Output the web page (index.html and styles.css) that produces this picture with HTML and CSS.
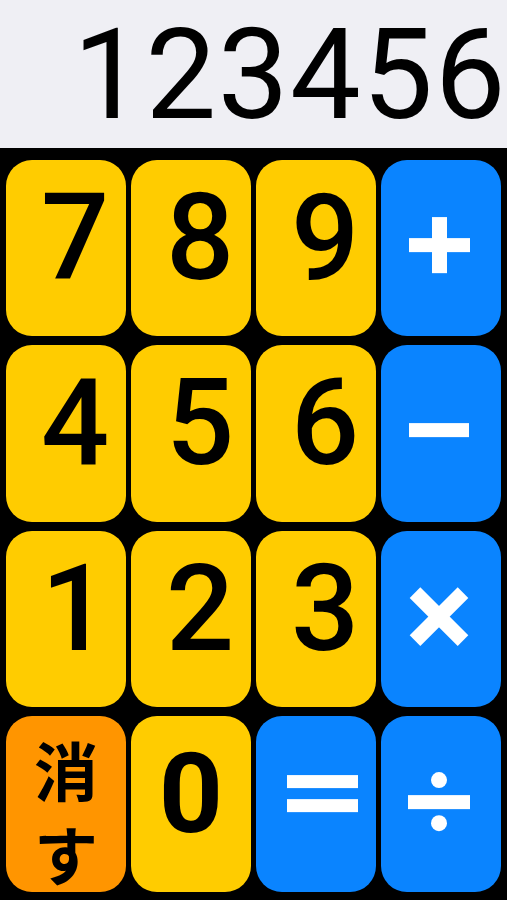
FILE: index.html
```html
<!DOCTYPE html>
<html lang="ja">
<head>
<meta charset="utf-8">
<title>Calculator</title>
<link rel="stylesheet" href="styles.css">
</head>
<body>
<div class="app">
  <div class="display">123456</div>
  <div class="keypad">
    <div class="key num">7</div>
    <div class="key num">8</div>
    <div class="key num">9</div>
    <div class="key op">
      <svg viewBox="0 0 120 176" preserveAspectRatio="none"><rect x="28" y="78" width="61" height="14" fill="#fff"/><rect x="51" y="57" width="15" height="56" fill="#fff"/></svg>
    </div>
    <div class="key num">4</div>
    <div class="key num">5</div>
    <div class="key num">6</div>
    <div class="key op">
      <svg viewBox="0 0 120 176" preserveAspectRatio="none"><rect x="28" y="78" width="60" height="14" fill="#fff"/></svg>
    </div>
    <div class="key num">1</div>
    <div class="key num">2</div>
    <div class="key num">3</div>
    <div class="key op">
      <svg viewBox="0 0 120 176" preserveAspectRatio="none"><line x1="34" y1="61.5" x2="82" y2="109.5" stroke="#fff" stroke-width="15"/><line x1="82" y1="61.5" x2="34" y2="109.5" stroke="#fff" stroke-width="15"/></svg>
    </div>
    <div class="key clear"><span class="ch">消</span><span class="ch">す</span></div>
    <div class="key num zero">0</div>
    <div class="key op">
      <svg viewBox="0 0 120 176" preserveAspectRatio="none"><rect x="31" y="59" width="71" height="13" fill="#fff"/><rect x="31" y="83" width="71" height="13" fill="#fff"/></svg>
    </div>
    <div class="key op">
      <svg viewBox="0 0 120 176" preserveAspectRatio="none"><rect x="27" y="79" width="62" height="14" fill="#fff"/><circle cx="58" cy="64" r="8" fill="#fff"/><circle cx="58" cy="107" r="8" fill="#fff"/></svg>
    </div>
  </div>
</div>
</body>
</html>
```

FILE: styles.css
```css
html, body {
  margin: 0;
  padding: 0;
  background: #000;
}

.app {
  width: 507px;
  height: 900px;
  display: flex;
  flex-direction: column;
  overflow: hidden;
}

.display {
  height: 148px;
  flex: 0 0 148px;
  background: #efeff4;
  color: #000;
  font-family: Roboto, "Liberation Sans", sans-serif;
  font-weight: 400;
  font-size: 126px;
  letter-spacing: 1.5px;
  line-height: 150px;
  text-align: right;
  padding-right: 0;
  white-space: nowrap;
}

.keypad {
  flex: 1;
  min-height: 0;
  display: grid;
  grid-template-columns: repeat(4, 120px);
  grid-template-rows: repeat(4, minmax(0, 1fr));
  column-gap: 5px;
  row-gap: 9px;
  padding: 12px 6px 8px;
  background: #000;
}

.key {
  min-height: 0;
  border-radius: 26px;
  display: flex;
  align-items: center;
  justify-content: center;
  box-sizing: border-box;
}

.num {
  background: #ffcc00;
  color: #000;
  font-family: Roboto, "Liberation Sans", sans-serif;
  font-weight: 500;
  font-size: 120px;
  line-height: 1;
  padding: 0 0 20px 18px;
}

.zero {
  font-weight: 700;
  font-size: 112px;
  padding: 0 0 20px 0;
}

.clear {
  background: #ff9500;
  color: #000;
  flex-direction: column;
  justify-content: flex-start;
  gap: 18px;
  padding-top: 19px;
  font-family: "Noto Sans CJK JP", sans-serif;
  font-weight: 700;
  font-size: 64px;
  line-height: 66px;
}

.ch {
  display: block;
}

.op {
  background: #0a84ff;
}

.op svg {
  display: block;
  width: 100%;
  height: 100%;
}
```
